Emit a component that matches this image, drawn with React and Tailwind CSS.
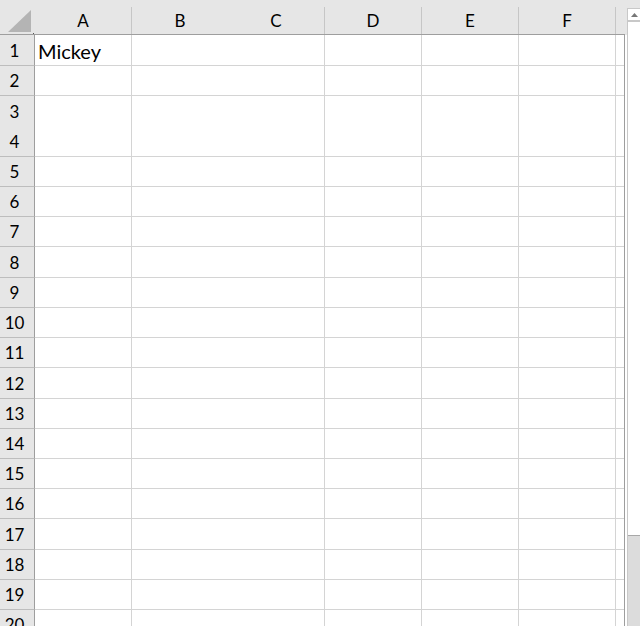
import React from "react";

const rows = [
  { l: ["1"], h: 31, a: "Mickey" },
  { l: ["2"], h: 30 },
  { l: ["3", "4"], h: 61 },
  { l: ["5"], h: 30 },
  { l: ["6"], h: 30 },
  { l: ["7"], h: 30 },
  { l: ["8"], h: 31 },
  { l: ["9"], h: 30 },
  { l: ["10"], h: 30 },
  { l: ["11"], h: 30 },
  { l: ["12"], h: 31 },
  { l: ["13"], h: 30 },
  { l: ["14"], h: 30 },
  { l: ["15"], h: 30 },
  { l: ["16"], h: 30 },
  { l: ["17"], h: 31 },
  { l: ["18"], h: 30 },
  { l: ["19"], h: 30 },
  { l: ["20"], h: 30 },
];

const font = { fontFamily: "Lato, 'Open Sans', sans-serif" };

export default function App() {
  return (
    <div className="w-[640px] h-[626px] overflow-hidden bg-white flex" style={font}>
      <div className="w-[627px] flex flex-col">
        {/* header */}
        <div className="h-[35px] bg-[#e6e6e6] flex shrink-0">
          <div className="w-[35px] h-[35px] relative border-b border-[#9e9e9e]">
            <svg width="35" height="35" className="absolute left-0 top-0">
              <polygon points="8,32 31,32 31,10" fill="#b4b4b4" />
              <rect x="33" y="33" width="1" height="1" fill="#555" />
            </svg>
          </div>
          <div className="w-[590px] flex flex-col">
            <div className="h-[6px]" />
            <div className="flex h-[29px] border-b border-[#9e9e9e] text-[17px] text-black pt-[1px]">
              <div className="w-[97px] border-r border-[#c6c6c6] flex items-center justify-center">A</div>
              <div className="w-[193px] border-r border-[#c6c6c6] flex items-center">
                <div className="w-[96px] text-center">B</div>
                <div className="w-[96px] text-center">C</div>
              </div>
              <div className="w-[97px] border-r border-[#c6c6c6] flex items-center justify-center">D</div>
              <div className="w-[97px] border-r border-[#c6c6c6] flex items-center justify-center">E</div>
              <div className="w-[97px] border-r border-[#c6c6c6] flex items-center justify-center">F</div>
              <div className="w-[9px]" />
            </div>
          </div>
          <div className="w-[2px]" />
        </div>
        {/* body */}
        <div className="flex flex-col w-[625px] border-r border-[#9e9e9e]">
          {rows.map((r, i) => (
            <div key={i} className="flex shrink-0" style={{ height: r.h }}>
              <div className="w-[35px] bg-[#e6e6e6] border-r border-b border-r-[#9e9e9e] border-b-[#bdbdbd] flex flex-col text-[17px] text-black pr-[5px] pt-[1px]">
                {r.l.map((t) => (
                  <div key={t} className="flex-1 flex items-center justify-center">{t}</div>
                ))}
              </div>
              <div className="w-[97px] border-r border-b border-[#d4d4d4] flex items-center pl-[3px] pt-[1px] text-[20px] text-black">{r.a || ""}</div>
              <div className="w-[193px] border-r border-b border-[#d4d4d4]" />
              <div className="w-[97px] border-r border-b border-[#d4d4d4]" />
              <div className="w-[97px] border-r border-b border-[#d4d4d4]" />
              <div className="w-[97px] border-r border-b border-[#d4d4d4]" />
              <div className="w-[8px] border-b border-[#d4d4d4]" />
            </div>
          ))}
        </div>
      </div>
      {/* scrollbar */}
      <div className="w-[13px] flex flex-col">
        <div className="h-[8px] bg-[#e6e6e6] shrink-0" />
        <div className="flex-1 flex flex-col border-l border-t border-[#c8c8c8]">
          <div className="h-[13px] flex items-center justify-center border-b-2 border-[#c8c8c8] shrink-0">
            <svg width="7" height="4"><polygon points="0,4 7,4 3.5,0" fill="#777" /></svg>
          </div>
          <div className="h-[513px] shrink-0 bg-white" />
          <div className="flex-1 bg-[#dcdcdc] border-t border-[#a8a8a8]" />
        </div>
      </div>
    </div>
  );
}
